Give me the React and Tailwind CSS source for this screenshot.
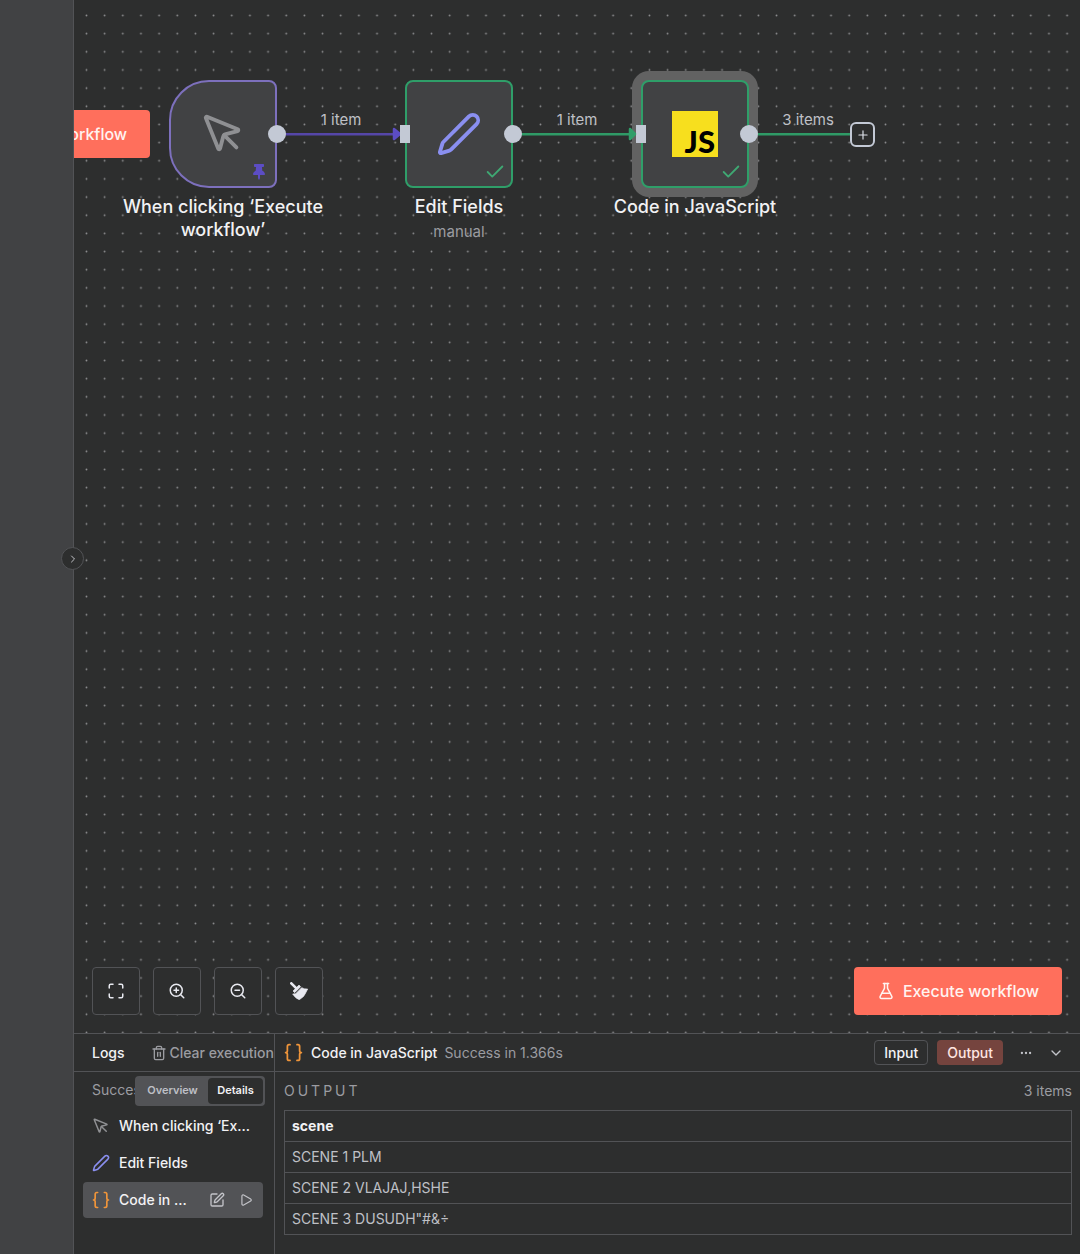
import React, { useState } from 'react'
import {
  Braces,
  Check,
  ChevronDown,
  ChevronRight,
  Ellipsis,
  FlaskConical,
  Maximize,
  MousePointer,
  Pen,
  Play,
  Plus,
  SquarePen,
  Trash2,
  ZoomIn,
  ZoomOut
} from 'lucide-react'
import { FaThumbtack } from 'react-icons/fa'

const rows = ['SCENE 1 PLM', 'SCENE 2 VLAJAJ,HSHE', 'SCENE 3 DUSUDH"#&÷']

const BroomIcon = () => (
  <svg viewBox="0 0 54 54" className="h-[18px] w-[18px]" fill="currentColor">
    <path d="M4 4l16 16" stroke="currentColor" strokeWidth="8" strokeLinecap="round" />
    <path d="M9 27L27 9l5 5-18 18z" stroke="currentColor" strokeWidth="2" strokeLinejoin="round" />
    <path d="M17 35l18-18q8 5 18 4l-5 10q-5 14-20 22-11-3-20-17z" stroke="currentColor" strokeWidth="2" strokeLinejoin="round" />
  </svg>
)

const ExecuteButton = () => (
  <button className="flex h-12 w-52 items-center justify-center gap-2 rounded-sm bg-[#ff6f5c] text-base font-medium text-[#fff3f0]">
    <FlaskConical className="h-[18px] w-[18px]" strokeWidth={2} />
    Execute workflow
  </button>
)

const ControlButton = ({ label, children }) => (
  <button
    aria-label={label}
    className="flex h-12 w-12 items-center justify-center rounded-sm border border-[#525356] bg-[#2d2e2e] text-[#e8e9f0]"
  >
    {children}
  </button>
)

// Node label and its optional subtitle, centred under the node box
const NodeLabel = ({ title, subtitle }) => (
  <div className="absolute top-full left-1/2 mt-[9px] w-52 -translate-x-1/2 text-center">
    <div className="text-lg/[23px] font-medium text-[#f2f2f4]">{title}</div>
    {subtitle && <div className="text-[15px]/7 text-[#9b9ca1]">{subtitle}</div>}
  </div>
)

const OutputHandle = () => (
  <div className="absolute top-1/2 -right-0.5 h-[18px] w-[18px] translate-x-1/2 -translate-y-1/2 rounded-full bg-[#c3c9d5]" />
)

const InputHandle = () => (
  <div className="absolute top-1/2 -left-0.5 h-[18px] w-2.5 -translate-x-1/2 -translate-y-1/2 bg-[#c3c9d5]" />
)

const Canvas = () => (
  <section className="relative flex flex-1 flex-col justify-end overflow-hidden bg-[#2d2e2e]">
    {/* Dot grid */}
    <svg className="absolute inset-0 h-full w-full" aria-hidden="true">
      <defs>
        <pattern id="dots" x="3.4" y="6.4" width="18.16" height="18.16" patternUnits="userSpaceOnUse">
          <circle cx="9.08" cy="9.08" r="0.9" fill="#8f9092" />
        </pattern>
      </defs>
      <rect width="100%" height="100%" fill="url(#dots)" />
    </svg>

    <div className="absolute top-[110px] left-[-132px]">
      <ExecuteButton />
    </div>

    {/* Edges */}
    <svg className="absolute top-0 left-0 h-60 w-[820px]" fill="none" strokeWidth="2.5" aria-hidden="true">
      <path d="M203 134.2H322" stroke="#5546a8" />
      <path d="M320 129l6 5-6 5z" fill="#5c4dc4" stroke="#5c4dc4" strokeLinejoin="round" />
      <path d="M439 134.2H558" stroke="#2f9a66" />
    </svg>
    <span className="absolute top-[110px] left-[217px] w-[100px] text-center text-[15px]/5 text-[#bfc0c6]">1 item</span>
    <span className="absolute top-[110px] left-[453px] w-[100px] text-center text-[15px]/5 text-[#bfc0c6]">1 item</span>
    <span className="absolute top-[110px] left-[684px] w-[100px] text-center text-[15px]/5 text-[#bfc0c6]">3 items</span>

    {/* Nodes */}
    <div className="absolute top-20 left-[95px] flex h-[108px] w-[108px] items-center justify-center rounded-l-[40px] rounded-r-lg border-2 border-[#7d70bd] bg-[#414244]">
      <MousePointer className="h-[46px] w-[46px] text-[#8f9093]" />
      <FaThumbtack className="absolute right-2 bottom-1.5 h-4 w-4 text-[#5c4dc4]" />
      <OutputHandle />
      <NodeLabel title="When clicking ‘Execute workflow’" />
    </div>

    <div className="absolute top-20 left-[331px] flex h-[108px] w-[108px] items-center justify-center rounded-lg border-2 border-[#2f9e69] bg-[#414244]">
      <Pen className="h-[46px] w-[46px] text-[#8a8ff0]" />
      <Check className="absolute right-[5px] bottom-[3px] h-[22px] w-[22px] text-[#3fa873]" />
      <InputHandle />
      <OutputHandle />
      <NodeLabel title="Edit Fields" subtitle="manual" />
    </div>

    <div className="absolute top-20 left-[567px] flex h-[108px] w-[108px] items-center justify-center rounded-lg border-2 border-[#2f9e69] bg-[#414244] ring-9 ring-[#626262]">
      <div className="flex h-[46px] w-[46px] items-end justify-end bg-[#f7df1e] pr-[3px] font-['Lato'] text-[31px]/[31px] font-black text-black">
        JS
      </div>
      <Check className="absolute right-[5px] bottom-[3px] h-[22px] w-[22px] text-[#3fa873]" />
      <InputHandle />
      <OutputHandle />
      <NodeLabel title="Code in JavaScript" />
    </div>

    <svg className="absolute top-0 left-0 h-60 w-[820px]" fill="none" strokeWidth="2.5" aria-hidden="true">
      <path d="M684 134.2H777" stroke="#2f9a66" />
      <path d="M556 129l5 5-5 5z" fill="#2f9e69" stroke="#2f9e69" strokeLinejoin="round" />
    </svg>
    <button
      aria-label="Add node"
      className="absolute top-[122px] left-[776px] flex h-[25px] w-[25px] items-center justify-center rounded-md border-2 border-[#c3c9d5] bg-[#2d2e2e] text-[#dfe2ea]"
    >
      <Plus className="h-3.5 w-3.5" />
    </button>

    {/* Canvas controls */}
    <div className="relative flex items-center justify-between px-[18px] pb-[18px]">
      <div className="flex gap-[13px]">
        <ControlButton label="Fit to view">
          <Maximize className="h-[18px] w-[18px]" />
        </ControlButton>
        <ControlButton label="Zoom in">
          <ZoomIn className="h-[18px] w-[18px]" />
        </ControlButton>
        <ControlButton label="Zoom out">
          <ZoomOut className="h-[18px] w-[18px]" />
        </ControlButton>
        <ControlButton label="Tidy up">
          <BroomIcon />
        </ControlButton>
      </div>
      <ExecuteButton />
    </div>
  </section>
)

const LogsList = () => {
  const [view, setView] = useState('Details')

  return (
    <div className="flex w-[201px] shrink-0 flex-col border-r border-[#525356]">
      <div className="flex h-[38px] items-center justify-between overflow-hidden border-b border-[#525356] pl-[18px]">
        <h2 className="text-sm font-medium text-[#f2f2f4]">Logs</h2>
        <button className="flex items-center gap-0.5 text-sm font-medium whitespace-nowrap text-[#9b9ca1]">
          <Trash2 className="h-4 w-4" />
          Clear execution
        </button>
      </div>

      <div className="relative flex h-9 items-center pl-[18px] text-sm text-[#9b9ca1]">
        Success
        <div className="absolute top-1 right-[9px] flex h-[30px] w-[130px] items-center rounded-sm bg-[#525356] p-0.5 text-[11px] font-semibold">
          {['Overview', 'Details'].map((name) => (
            <button
              key={name}
              onClick={() => setView(name)}
              className={
                view === name
                  ? 'h-[26px] w-[55px] rounded-sm bg-[#2d2e2e] text-[#f2f2f4]'
                  : 'h-[26px] flex-1 rounded-sm text-[#bfc0c6]'
              }
            >
              {name}
            </button>
          ))}
        </div>
      </div>

      <ul className="mx-[9px] flex flex-col gap-px text-sm font-medium text-[#f2f2f4]">
        <li className="flex h-9 items-center gap-[9px] pl-[9px]">
          <MousePointer className="h-[18px] w-[18px] text-[#8f9093]" />
          When clicking ‘Ex...
        </li>
        <li className="flex h-9 items-center gap-[9px] pl-[9px]">
          <Pen className="h-[18px] w-[18px] text-[#8a8ff0]" />
          Edit Fields
        </li>
        <li className="mr-0.5 flex h-9 items-center gap-2 rounded-sm bg-[#525356] pr-2.5 pl-2">
          <Braces className="h-5 w-5 text-[#f0953a]" />
          <span className="flex-1">Code in ...</span>
          <button aria-label="Open" className="mr-1.5 text-[#c3c4c9]">
            <SquarePen className="h-4 w-4" />
          </button>
          <button aria-label="Run" className="text-[#c3c4c9]">
            <Play className="h-3.5 w-3.5" />
          </button>
        </li>
      </ul>
    </div>
  )
}

const LogDetails = () => (
  <div className="min-w-0 flex-1">
    <div className="flex h-[38px] items-center border-b border-[#525356] pr-4 pl-2">
      <Braces className="h-[21px] w-[21px] text-[#f0953a]" />
      <span className="ml-[7px] text-sm font-medium text-[#f2f2f4]">Code in JavaScript</span>
      <span className="ml-[7px] text-sm text-[#9b9ca1]">Success in 1.366s</span>
      <button className="ml-auto h-[25px] rounded-sm border border-[#525356] px-[9px] text-sm font-medium text-[#f2f2f4]">
        Input
      </button>
      <button className="ml-[9px] h-[25px] rounded-sm bg-[#75443e] px-2.5 text-sm font-medium text-[#ffe5e0]">
        Output
      </button>
      <button aria-label="More" className="ml-4 text-[#c3c4c9]">
        <Ellipsis className="h-3.5 w-3.5" />
      </button>
      <button aria-label="Collapse panel" className="ml-[15px] text-[#c3c4c9]">
        <ChevronDown className="h-4 w-4" />
      </button>
    </div>

    <div className="pt-2.5 pr-2 pb-[19px] pl-[9px]">
      <div className="mb-2.5 flex h-[18px] items-center justify-between text-sm text-[#9b9ca1]">
        <h3 className="tracking-[3px]">OUTPUT</h3>
        <span>3 items</span>
      </div>
      <table className="w-full border-collapse text-left text-sm/[30px] text-[#bfc0c6]">
        <thead>
          <tr>
            <th className="border border-[#525356] px-[7px] py-0 font-bold text-[#f2f2f4]">scene</th>
          </tr>
        </thead>
        <tbody>
          {rows.map((row) => (
            <tr key={row}>
              <td className="border border-[#525356] px-[7px] py-0">{row}</td>
            </tr>
          ))}
        </tbody>
      </table>
    </div>
  </div>
)

export default function App() {
  return (
    <div className="flex min-h-screen bg-[#2d2e2e] font-['Inter',sans-serif]">
      {/* Collapsed sidebar */}
      <aside className="relative z-10 w-[74px] shrink-0 border-r border-[#525356] bg-[#414244]">
        <button
          aria-label="Expand sidebar"
          className="absolute top-[547px] -right-[11px] flex h-[23px] w-[23px] items-center justify-center rounded-full border border-[#525356] bg-[#2d2e2e] text-[#c3c4c9]"
        >
          <ChevronRight className="h-3 w-3" />
        </button>
      </aside>

      <main className="flex min-w-0 flex-1 flex-col">
        <Canvas />
        <section className="flex border-t border-[#525356]">
          <LogsList />
          <LogDetails />
        </section>
      </main>
    </div>
  )
}
